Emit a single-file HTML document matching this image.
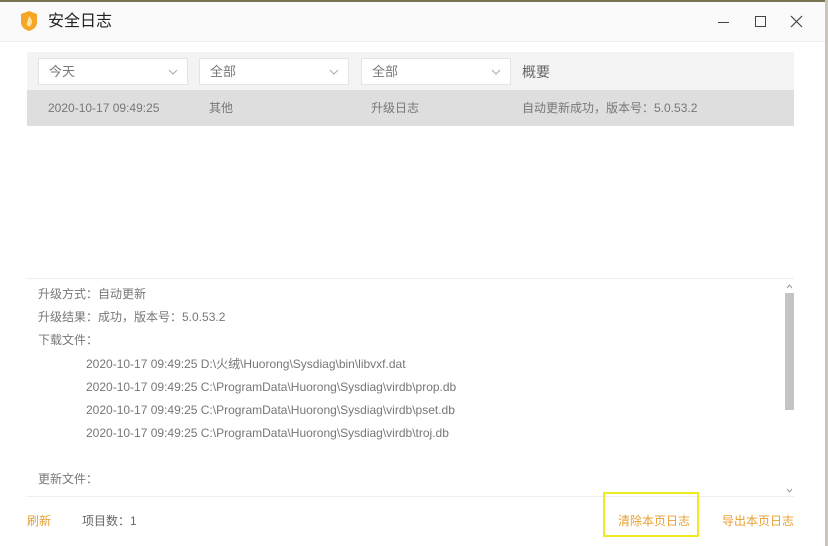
<!DOCTYPE html>
<html><head><meta charset="utf-8"><style>
*{margin:0;padding:0;box-sizing:border-box}
body{width:828px;height:546px;background:#fff;font-family:"Liberation Sans","Noto Sans CJK SC",sans-serif;position:relative;overflow:hidden;color:#666}
.a{position:absolute;white-space:nowrap;line-height:16px}
.dd{position:absolute;top:58px;height:27px;width:150px;background:#fff;border:1px solid #e4e4e4;font-size:13px;color:#777;padding:0 10px;line-height:25px}
.dd svg{position:absolute;right:9px;top:10px}
.t{font-size:12px;color:#777}
</style></head><body>
<div class="a" style="left:0;top:0;width:828px;height:2px;background:#7a7450"></div>
<div class="a" style="left:0;top:2px;width:826px;height:40px;background:#fafafa;border-bottom:1px solid #eee"></div>
<div class="a" style="left:825px;top:0;width:3px;height:546px;background:#c8c6b8"></div>
<svg class="a" style="left:20px;top:10px" width="18" height="22" viewBox="0 0 18 22"><path d="M9 1 L17 4 V12 C17 17 13 20 9 21 C5 20 1 17 1 12 V4 Z" fill="#f5a623"/><path d="M9 6 C12 9 13 12 11 15 C10 17 8 17 7 15 C6 13 8 11 9 6 Z" fill="#fde3a8"/></svg>
<div class="a" style="left:48px;top:12px;font-size:16px;color:#222;line-height:20px">安全日志</div>
<div class="a" style="left:718px;top:22px;width:11px;height:1px;background:#444"></div>
<div class="a" style="left:755px;top:16px;width:11px;height:11px;border:1px solid #444"></div>
<svg class="a" style="left:790px;top:15px" width="13" height="13"><path d="M1 1L12 12M12 1L1 12" stroke="#444" stroke-width="1.2"/></svg>
<div class="a" style="left:27px;top:52px;width:767px;height:38px;background:#f3f3f3"></div>
<div class="dd" style="left:38px">今天<svg width="10" height="6"><path d="M1 1L5 5L9 1" stroke="#aaa" fill="none"/></svg></div>
<div class="dd" style="left:199px">全部<svg width="10" height="6"><path d="M1 1L5 5L9 1" stroke="#aaa" fill="none"/></svg></div>
<div class="dd" style="left:361px">全部<svg width="10" height="6"><path d="M1 1L5 5L9 1" stroke="#aaa" fill="none"/></svg></div>
<div class="a" style="left:522px;top:64px;font-size:14px;color:#666">概要</div>
<div class="a" style="left:27px;top:90px;width:767px;height:36px;background:#dedede"></div>
<div class="a" style="left:48px;top:100px;font-size:12px;color:#777">2020-10-17 09:49:25</div>
<div class="a" style="left:209px;top:100px;font-size:12px;color:#777">其他</div>
<div class="a" style="left:371px;top:100px;font-size:12px;color:#777">升级日志</div>
<div class="a" style="left:522px;top:100px;font-size:12px;color:#777">自动更新成功，版本号：5.0.53.2</div>
<div class="a" style="left:27px;top:278px;width:767px;height:1px;background:#eee"></div>
<div class="a t" style="left:38px;top:286px">升级方式：自动更新</div>
<div class="a t" style="left:38px;top:309px">升级结果：成功，版本号：5.0.53.2</div>
<div class="a t" style="left:38px;top:332px">下载文件：</div>
<div class="a t" style="left:86px;top:356px">2020-10-17 09:49:25 D:\火绒\Huorong\Sysdiag\bin\libvxf.dat</div>
<div class="a t" style="left:86px;top:379px">2020-10-17 09:49:25 C:\ProgramData\Huorong\Sysdiag\virdb\prop.db</div>
<div class="a t" style="left:86px;top:402px">2020-10-17 09:49:25 C:\ProgramData\Huorong\Sysdiag\virdb\pset.db</div>
<div class="a t" style="left:86px;top:425px">2020-10-17 09:49:25 C:\ProgramData\Huorong\Sysdiag\virdb\troj.db</div>
<div class="a t" style="left:38px;top:471px">更新文件：</div>
<svg class="a" style="left:786px;top:284px" width="7" height="5"><path d="M1 4L3.5 1L6 4" stroke="#999" fill="none"/></svg>
<div class="a" style="left:785px;top:293px;width:9px;height:117px;background:#c4c4c4"></div>
<svg class="a" style="left:786px;top:488px" width="7" height="5"><path d="M1 1L3.5 4L6 1" stroke="#999" fill="none"/></svg>
<div class="a" style="left:27px;top:496px;width:767px;height:1px;background:#eee"></div>
<div class="a" style="left:27px;top:513px;font-size:12px;color:#e8a030">刷新</div>
<div class="a" style="left:82px;top:513px;font-size:12px;color:#666">项目数：1</div>
<div class="a" style="left:603px;top:492px;width:96px;height:45px;border:2px solid #f0ea20"></div>
<div class="a" style="left:618px;top:513px;font-size:12px;color:#e8a030">清除本页日志</div>
<div class="a" style="left:722px;top:513px;font-size:12px;color:#e8a030">导出本页日志</div>
</body></html>
